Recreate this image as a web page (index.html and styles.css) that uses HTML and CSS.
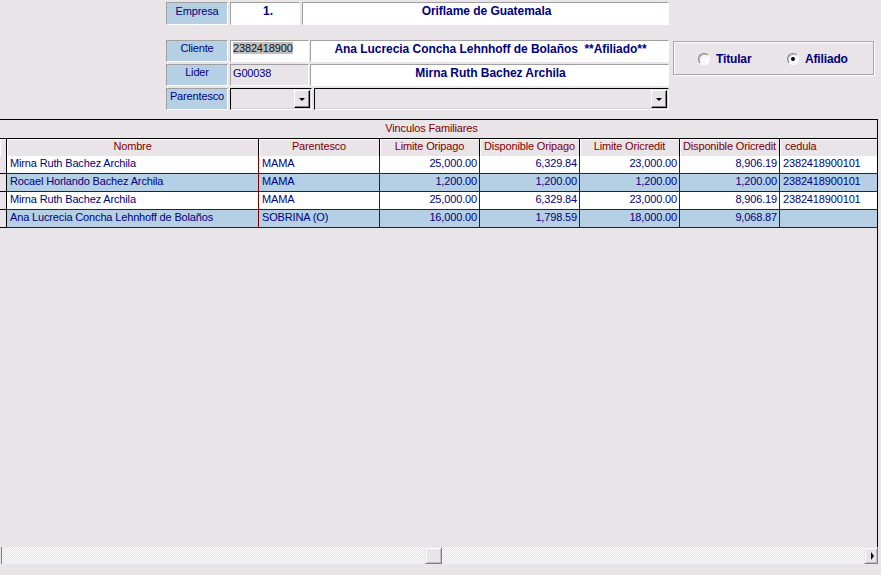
FILE: index.html
```html
<!DOCTYPE html>
<html lang="es">
<head>
<meta charset="utf-8">
<title>Vinculos Familiares</title>
<link rel="stylesheet" href="styles.css">
</head>
<body>
<div class="form">
  <div class="row row-emp">
    <div class="cell lbl lbl-emp">Empresa</div>
    <div class="cell val val-emp bold center">1.</div>
    <div class="cell val name-emp bold center">Oriflame de Guatemala</div>
  </div>
  <div class="sect">
    <div class="fields">
      <div class="row">
        <div class="cell lbl">Cliente</div>
        <div class="cell val val-cli"><span class="sel">2382418900</span></div>
        <div class="cell val name-cli bold center">Ana Lucrecia Concha Lehnhoff de Bolaños &nbsp;**Afiliado**</div>
      </div>
      <div class="row">
        <div class="cell lbl">Lider</div>
        <div class="cell val val-cli dim">G00038</div>
        <div class="cell val name-cli bold center">Mirna Ruth Bachez Archila</div>
      </div>
      <div class="row">
        <div class="cell lbl">Parentesco</div>
        <div class="combo combo1"><div class="combo-txt"></div><div class="dd"><span class="tri-down"></span></div></div>
        <div class="combo combo2"><div class="combo-txt"></div><div class="dd"><span class="tri-down"></span></div></div>
      </div>
    </div>
    <div class="radios">
      <div class="ropt ropt1"><span class="radio"></span><span class="rtxt">Titular</span></div>
      <div class="ropt"><span class="radio checked"></span><span class="rtxt">Afiliado</span></div>
    </div>
  </div>
</div>

<div class="grid">
  <div class="gtitle">Vinculos Familiares</div>
  <div class="grow ghead">
    <div class="gc ind"></div>
    <div class="gc">Nombre</div>
    <div class="gc">Parentesco</div>
    <div class="gc">Limite Oripago</div>
    <div class="gc">Disponible Oripago</div>
    <div class="gc">Limite Oricredit</div>
    <div class="gc">Disponible Oricredit</div>
    <div class="gc last left">cedula</div>
  </div>
  <div class="grow gdata">
    <div class="gc ind"></div>
    <div class="gc">Mirna Ruth Bachez Archila</div>
    <div class="gc">MAMA</div>
    <div class="gc num">25,000.00</div>
    <div class="gc num">6,329.84</div>
    <div class="gc num">23,000.00</div>
    <div class="gc num">8,906.19</div>
    <div class="gc last">2382418900101</div>
  </div>
  <div class="grow gdata alt">
    <div class="gc ind"></div>
    <div class="gc">Rocael Horlando Bachez Archila</div>
    <div class="gc">MAMA</div>
    <div class="gc num">1,200.00</div>
    <div class="gc num">1,200.00</div>
    <div class="gc num">1,200.00</div>
    <div class="gc num">1,200.00</div>
    <div class="gc last">2382418900101</div>
  </div>
  <div class="grow gdata">
    <div class="gc ind"></div>
    <div class="gc">Mirna Ruth Bachez Archila</div>
    <div class="gc">MAMA</div>
    <div class="gc num">25,000.00</div>
    <div class="gc num">6,329.84</div>
    <div class="gc num">23,000.00</div>
    <div class="gc num">8,906.19</div>
    <div class="gc last">2382418900101</div>
  </div>
  <div class="grow gdata alt">
    <div class="gc ind"></div>
    <div class="gc">Ana Lucrecia Concha Lehnhoff de Bolaños</div>
    <div class="gc">SOBRINA (O)</div>
    <div class="gc num">16,000.00</div>
    <div class="gc num">1,798.59</div>
    <div class="gc num">18,000.00</div>
    <div class="gc num">9,068.87</div>
    <div class="gc last"></div>
  </div>
</div>

<div class="hscroll">
  <div class="sb-stub"></div>
  <div class="sb-track sb-left"></div>
  <div class="sb-thumb"></div>
  <div class="sb-track sb-right"></div>
  <div class="sb-btn"><span class="tri-right"></span></div>
</div>
</body>
</html>
```
FILE: styles.css
```css
* { box-sizing: border-box; }
html, body { margin: 0; padding: 0; }
body {
  background: #e8e4e8;
  font-family: "Liberation Sans", Arial, sans-serif;
  font-size: 11px;
  letter-spacing: -0.15px;
  color: #000080;
  width: 881px;
  height: 575px;
  overflow: hidden;
}
.bold { font-weight: bold; font-size: 12px; letter-spacing: -0.05px; }
.center { text-align: center; }

.form { padding: 2px 0 0 166px; }
.row { display: flex; height: 22px; }
.row-emp { height: 23px; }
.fields { display: flex; flex-direction: column; gap: 2px; width: 503px; }
.sect { display: flex; margin-top: 15px; }

.cell {
  height: 100%;
  border: 1px solid;
  border-color: #a0a0a0 #ffffff #ffffff #a0a0a0;
  white-space: nowrap;
  overflow: hidden;
}
.lbl {
  width: 62px;
  margin-right: 2px;
  background: #b5cfe5;
  text-align: center;
  line-height: 13px;
  padding-top: 1px;
}
.lbl-emp { padding-top: 2px; }
.val { background: #ffffff; line-height: 14px; padding: 1px 0 0 2px; }
.val.bold { line-height: 13px; padding-top: 2px; }
.val-emp { width: 70px; margin-right: 2px; padding-left: 6px; }
.name-emp { width: 367px; }
.val-cli { width: 79px; margin-right: 1px; line-height: 13px; padding-top: 1px; }
.val-cli.dim { background: transparent; padding-top: 2px; }
.name-cli { width: 359px; }
.val.name-cli { line-height: 14px; padding-top: 1px; }
.sel { background: #c0c0c0; color: #101010; }

.combo {
  height: 22px;
  display: flex;
  border: 1px solid;
  border-color: #000000 #ffffff #ffffff #000000;
  box-shadow: inset -1px -1px 0 #d4d0d4;
  padding: 1px;
}
.combo1 { width: 82px; margin-right: 2px; }
.combo2 { width: 355px; }
.combo-txt { flex: 1; }
.dd {
  width: 16px;
  height: 18px;
  background: #e8e4e8;
  border: 1px solid;
  border-color: #ffffff #000000 #000000 #ffffff;
  box-shadow: inset -1px -1px 0 #808080;
  display: flex;
  align-items: center;
  justify-content: center;
}
.tri-down {
  width: 0; height: 0;
  border-left: 3px solid transparent;
  border-right: 3px solid transparent;
  border-top: 3px solid #000;
  margin-top: 1px;
}

.radios {
  width: 201px;
  height: 34px;
  margin: 1px 0 0 4px;
  border: 1px solid #a8a4a8;
  box-shadow: inset 1px 1px 0 #ffffff, 1px 1px 0 #ffffff;
  display: flex;
  align-items: center;
  padding: 1px 0 0 24px;
}
.ropt { display: flex; align-items: center; }
.ropt1 { width: 89px; }
.radio {
  position: relative;
  width: 12px;
  height: 12px;
  border-radius: 50%;
  border: 1px solid;
  border-color: #808080 #ffffff #ffffff #808080;
  background: #f8f8f8;
  box-shadow: inset 1px 1px 0 #c8c4c8;
}
.radio.checked::after {
  content: "";
  position: absolute;
  left: 3px; top: 3px;
  width: 4px; height: 4px;
  border-radius: 50%;
  background: #000;
}
.rtxt { font-weight: bold; font-size: 12px; margin-left: 6px; }

.grid {
  margin-top: 9px;
  width: 878px;
  height: 428px;
  border-top: 1px solid #000;
  border-right: 1px solid #000;
}
.gtitle {
  height: 18px;
  line-height: 16px;
  text-align: center;
  color: #800000;
  padding-right: 14px;
}
.grow {
  display: grid;
  grid-template-columns: 7px 252px 121px 100px 100px 100px 100px 97px;
}
.gc { white-space: nowrap; overflow: hidden; }
.ghead { border-top: 1px solid #000; }
.ghead .gc {
  height: 17px;
  line-height: 15px;
  color: #800000;
  text-align: center;
  border-right: 1px solid #000;
  box-shadow: inset 1px 1px 0 #ffffff;
}
.ghead .gc.left { text-align: left; padding-left: 5px; }
.ghead .gc.last { border-right: 0; }
.gdata { background: #ffffff; }
.gdata.alt { background: #b5cfe5; }
.gdata .gc {
  height: 18px;
  line-height: 15px;
  padding: 0 3px;
  border-right: 1px solid #800000;
  border-bottom: 1px solid #800000;
}
.gdata .gc.num { text-align: right; padding-right: 2px; }
.gdata .gc.last { border-right: 0; padding-left: 3px; }
.gc.ind { background: #e8e4e8; border-right: 1px solid #000 !important; }
.gdata .gc.ind { border-bottom-color: #000; }

.hscroll { display: flex; width: 878px; height: 17px; }
.sb-stub {
  width: 2px;
  background: #e8e4e8;
  border-right: 1px solid #808080;
}
.sb-track {
  background-color: #ffffff;
  background-image: repeating-conic-gradient(#ffffff 0 25%, #e4e0e4 0 50%);
  background-size: 2px 2px;
}
.sb-left { width: 423px; }
.sb-right { flex: 1; }
.sb-thumb, .sb-btn {
  background: #e8e4e8;
  border: 1px solid;
  border-color: #e8e4e8 #808080 #808080 #e8e4e8;
  box-shadow: inset 1px 1px 0 #ffffff, inset -1px -1px 0 #c0bcc0;
}
.sb-thumb { width: 17px; }
.sb-btn { width: 14px; display: flex; align-items: center; justify-content: center; }
.tri-right {
  width: 0; height: 0;
  border-top: 4px solid transparent;
  border-bottom: 4px solid transparent;
  border-left: 3px solid #000;
  margin-left: 2px;
}
```
